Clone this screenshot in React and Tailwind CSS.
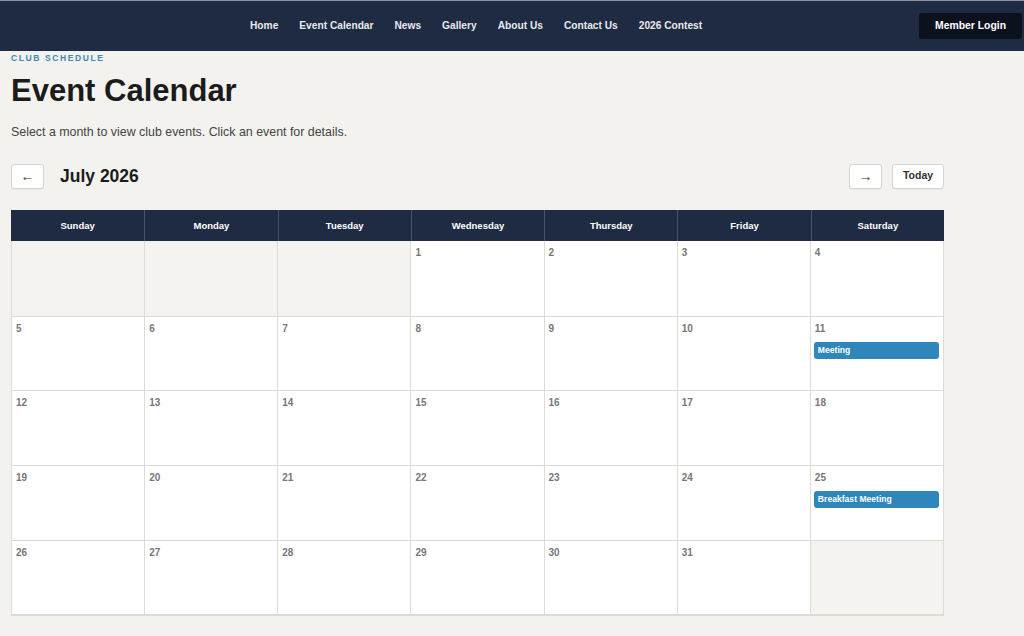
import React from 'react';

const NAV = ['Home', 'Event Calendar', 'News', 'Gallery', 'About Us', 'Contact Us', '2026 Contest'];
const DAYS = ['Sunday', 'Monday', 'Tuesday', 'Wednesday', 'Thursday', 'Friday', 'Saturday'];
const EVENTS = { 11: 'Meeting', 25: 'Breakfast Meeting' };

const buildWeeks = () => {
  const cells = [null, null, null];
  for (let d = 1; d <= 31; d++) cells.push(d);
  cells.push(null);
  const weeks = [];
  for (let i = 0; i < cells.length; i += 7) weeks.push(cells.slice(i, i + 7));
  return weeks;
};

const Header = () => (
  <header className="w-full h-[51px] bg-[#1f2b42] border-t border-[#8d939c] flex items-center">
    <nav className="flex items-center gap-[21px] pl-[250px]">
      {NAV.map((item) => (
        <a key={item} className="text-[10.2px] font-bold text-[#e8eaee] cursor-pointer">
          {item}
        </a>
      ))}
    </nav>
    <button className="ml-auto mr-[2px] h-[26px] w-[103px] rounded-[3px] bg-[#0c121d] text-[10.4px] font-bold text-white">
      Member Login
    </button>
  </header>
);

const NavButton = ({ children, className = '' }) => (
  <button
    className={`h-[25px] rounded-[3px] border border-[#d4d4d0] bg-white text-[#333] shadow-[0_1px_1px_rgba(0,0,0,0.04)] ${className}`}
  >
    {children}
  </button>
);

const Calendar = () => {
  const weeks = buildWeeks();
  return (
    <div className="w-[933px] border-b-2 border-[#dcdcd6]">
      <div className="grid grid-cols-7 bg-[#1f2b42] h-[31px]">
        {DAYS.map((d, i) => (
          <div
            key={d}
            className={`flex items-center justify-center text-[9.5px] font-bold text-white ${i > 0 ? 'border-l border-[#46536b]' : ''}`}
          >
            {d}
          </div>
        ))}
      </div>
      {weeks.map((week, wi) => (
        <div key={wi} className="grid grid-cols-7 h-[74.6px] border-l border-[#dcdcd6]">
          {week.map((day, di) => (
            <div
              key={di}
              className={`border-r border-t border-[#dcdcd6] ${wi === 0 ? 'border-t-0' : ''} ${day ? 'bg-white' : 'bg-[#f4f3ef]'} px-[3px] pt-[5px]`}
            >
              {day && (
                <>
                  <div className="pl-[1px] text-[10px] font-bold text-[#777] leading-[14px]">{day}</div>
                  {EVENTS[day] && (
                    <div className="mt-[6px] mr-[1px] h-[17px] rounded-[3px] bg-[#2e86ba] pl-[4px] text-[8.6px] font-bold text-white leading-[17px]">
                      {EVENTS[day]}
                    </div>
                  )}
                </>
              )}
            </div>
          ))}
        </div>
      ))}
    </div>
  );
};

export default function App() {
  return (
    <div className="min-h-[636px] bg-[#f3f2ee] font-['Liberation_Sans',Arial,sans-serif]">
      <Header />
      <main className="px-[11px]">
        <div className="text-[8.5px] font-bold tracking-[1.6px] text-[#3d88b4] leading-[12px] pt-[1px]">CLUB SCHEDULE</div>
        <h1 className="mt-[9px] text-[31px] font-bold text-[#1b1b1b] leading-[36px]">Event Calendar</h1>
        <p className="mt-[15px] text-[12.4px] text-[#444] leading-[16px]">
          Select a month to view club events. Click an event for details.
        </p>
        <div className="mt-[23px] w-[933px] flex items-center">
          <NavButton className="w-[33px] text-[14px]">←</NavButton>
          <h2 className="ml-[16px] text-[17.5px] font-bold text-[#1b1b1b]">July 2026</h2>
          <div className="ml-auto flex items-center gap-[10px]">
            <NavButton className="w-[33px] text-[14px]">→</NavButton>
            <NavButton className="w-[52px] text-[10.5px] font-bold">Today</NavButton>
          </div>
        </div>
        <div className="mt-[21px]">
          <Calendar />
        </div>
      </main>
    </div>
  );
}
